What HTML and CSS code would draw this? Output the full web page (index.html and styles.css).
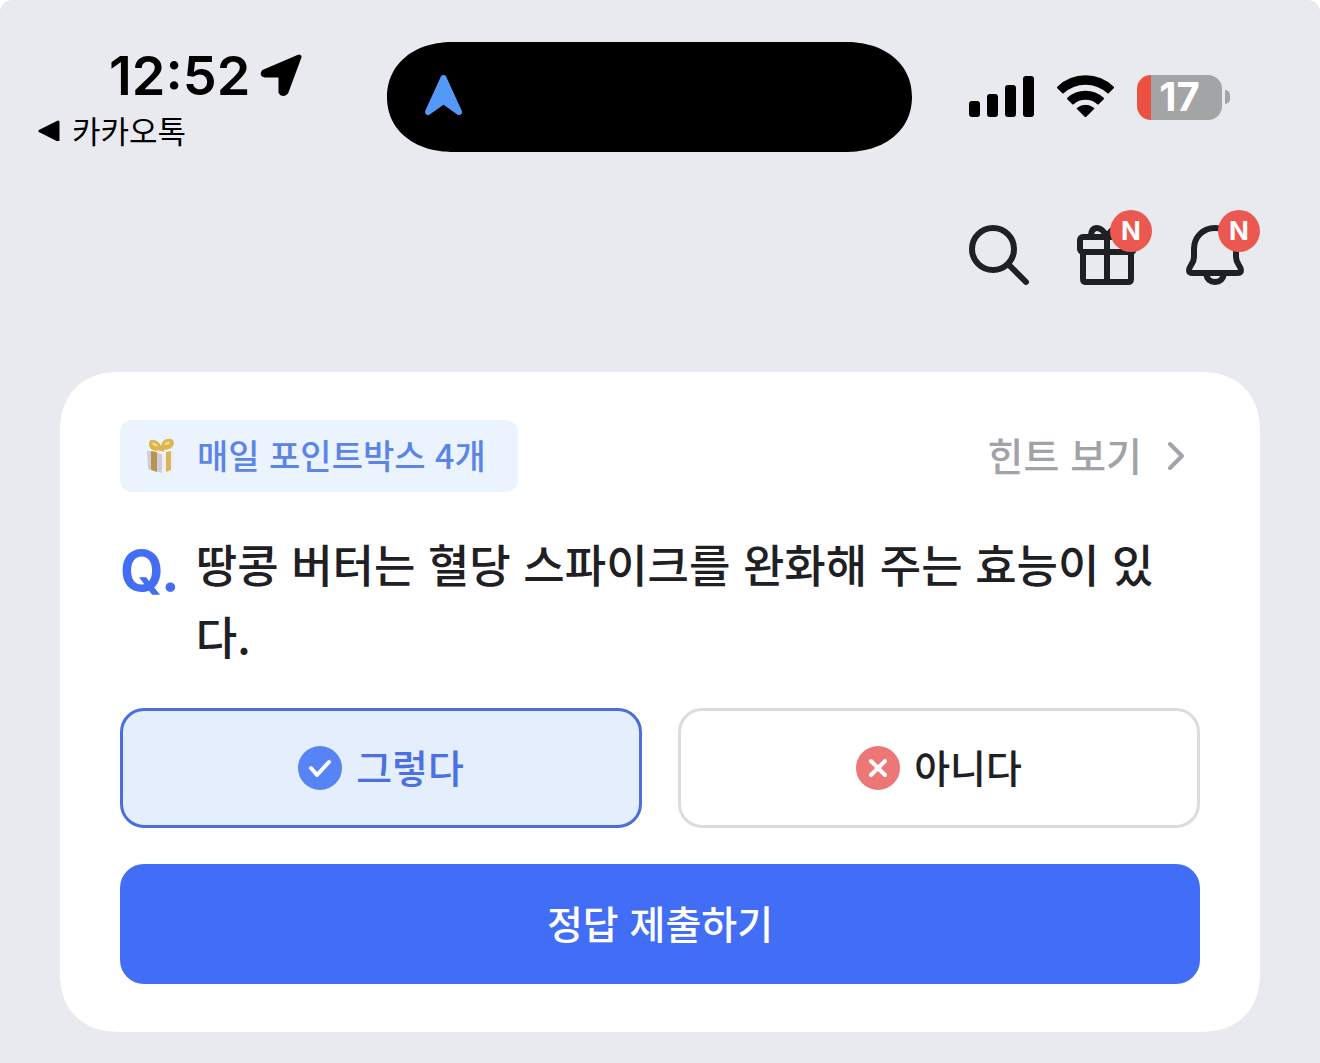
FILE: index.html
```html
<!DOCTYPE html>
<html lang="ko">
<head>
  <meta charset="UTF-8">
  <meta name="viewport" content="width=device-width, initial-scale=1">
  <title>오늘의 퀴즈</title>
  <link rel="stylesheet" href="styles.css">
</head>
<body>
  <div class="screen">
    <div class="status-bar">
      <div class="status-left">
        <div class="clock">
          <span>12:52</span>
          <svg width="44" height="44" viewBox="0 0 44 44" aria-hidden="true">
            <path d="M39 4L4 19Q2 22 5 22H21V39Q23 42 26 39Z" stroke="#000" stroke-width="5" stroke-linejoin="round"/>
          </svg>
        </div>
        <a class="back-app" href="#">
          <svg width="22" height="22" viewBox="0 0 22 22" aria-hidden="true">
            <path d="M2 12L20 3V21Z" stroke="#000" stroke-width="3" stroke-linejoin="round"/>
          </svg>
          카카오톡
        </a>
      </div>

      <div class="island">
        <svg width="40" height="46" viewBox="0 0 40 46" aria-hidden="true">
          <path d="M19.500 4L35 38L19.500 27L4 38Z" fill="#5599f8" stroke="#5599f8" stroke-width="6" stroke-linejoin="round"/>
        </svg>
      </div>

      <div class="status-right">
        <svg width="66" height="42" viewBox="0 0 66 42" aria-hidden="true">
          <rect x="0" y="25" width="11" height="16" rx="3"/>
          <rect x="18" y="18" width="11" height="23" rx="3"/>
          <rect x="36" y="9" width="11" height="32" rx="3"/>
          <rect x="54" y="0" width="11" height="41" rx="3"/>
        </svg>
        <svg width="60" height="44" viewBox="0 0 60 44" aria-hidden="true">
          <g stroke="#000" stroke-linejoin="round">
            <path d="M2 12.500A39.500 39.500 0 0 1 57 12.500L52 17.500A33 33 0 0 0 7 17.500Z" stroke-width="2"/>
            <path d="M12 23.500A26 26 0 0 1 47 23.500L42 28.500A19 19 0 0 0 17 28.500Z" stroke-width="2"/>
            <path d="M29.500 42L21 33.500A13 13 0 0 1 38 33.500Z" stroke-width="1"/>
          </g>
        </svg>
        <div class="battery">
          <span class="battery-level">17</span>
          <span class="battery-cap"></span>
        </div>
      </div>
    </div>

    <header class="toolbar">
      <button class="icon-btn" aria-label="검색">
        <svg width="72" height="72" viewBox="0 0 72 72">
          <circle cx="30" cy="30" r="21"/>
          <path d="M45 45L63 63"/>
        </svg>
      </button>
      <button class="icon-btn" aria-label="선물">
        <svg width="72" height="72" viewBox="0 0 72 72">
          <path d="M12 33V60Q12 63 15 63H57Q60 63 60 60V33M36 18V63"/>
          <rect x="9" y="18" width="54" height="15" rx="3"/>
          <path d="M36 18C33 12 30 9 26 9Q20 9 20 18M36 18C39 12 42 9 46 9Q52 9 52 18"/>
        </svg>
        <span class="badge">N</span>
      </button>
      <button class="icon-btn" aria-label="알림">
        <svg width="72" height="72" viewBox="0 0 72 72">
          <path d="M36 9C24 9 15 18 15 30V38C15 45 10 47 10 51Q10 54 14 54H58Q62 54 62 51C62 47 57 45 57 38V30C57 18 48 9 36 9Z"/>
          <path d="M27 55C28 60 31 63 36 63S44 60 45 55"/>
        </svg>
        <span class="badge">N</span>
      </button>
    </header>

    <main class="quiz-card">
      <div class="card-top">
        <div class="point-chip">
          <svg width="30" height="36" viewBox="0 0 30 36" aria-hidden="true">
            <path d="M1 12L16 15V35L2 31Z" fill="#cfcddc"/>
            <path d="M16 15L28 12V31L16 35Z" fill="#f0edf3"/>
            <path d="M1 12L14 9L28 12L16 16Z" fill="#fff"/>
            <path d="M5 13L11 14V34L5 32Z" fill="#b8954a"/>
            <path d="M20 14L25 13V32L20 34Z" fill="#d9b65c"/>
            <path d="M14 12C8 14 3 12 3 6Q3 1 8 2Q13 3 15 8Q16 2 21 1Q28 0 28 6Q26 12 17 12L20 14L14 13L9 15Z" fill="#dfb550"/>
            <path d="M6 5Q9 4 12 8Q8 9 6 5M18 7Q20 3 24 4Q24 7 18 7" fill="#f7df98"/>
          </svg>
          <span class="label">매일 포인트박스 4개</span>
        </div>
        <a class="hint-link" href="#">
          <span class="label">힌트 보기</span>
          <svg width="20" height="32" viewBox="0 0 20 32" aria-hidden="true">
            <path d="M4 4L16 16L4 28" fill="none" stroke="#a2a2a9" stroke-width="4" stroke-linecap="round" stroke-linejoin="round"/>
          </svg>
        </a>
      </div>

      <div class="question">
        <span class="question-mark">Q.</span>
        <p class="question-text">땅콩 버터는 혈당 스파이크를 완화해 주는 효능이 있다.</p>
      </div>

      <div class="answers">
        <button class="answer selected" aria-pressed="true">
          <svg width="44" height="44" viewBox="0 0 44 44" aria-hidden="true">
            <circle cx="22" cy="22" r="22" fill="#5784f5"/>
            <path d="M13 22L19 29L31 16" fill="none" stroke="#fff" stroke-width="4" stroke-linecap="round" stroke-linejoin="round"/>
          </svg>
          <span class="label">그렇다</span>
        </button>
        <button class="answer" aria-pressed="false">
          <svg width="44" height="44" viewBox="0 0 44 44" aria-hidden="true">
            <circle cx="22" cy="22" r="22" fill="#ed7777"/>
            <path d="M15 15L29 29M29 15L15 29" stroke="#fff" stroke-width="4" stroke-linecap="round"/>
          </svg>
          <span class="label">아니다</span>
        </button>
      </div>

      <button class="submit"><span class="label">정답 제출하기</span></button>
    </main>
  </div>
</body>
</html>
```

FILE: styles.css
```css
* {
  box-sizing: border-box;
}

body {
  margin: 0;
  background: #fff;
  color: #1f2024;
  font-family: "Noto Sans CJK KR", sans-serif;
  font-weight: 500;
}

button {
  padding: 0;
  border: none;
  background: none;
  color: inherit;
  font: inherit;
  cursor: pointer;
}

a {
  color: inherit;
  text-decoration: none;
}

svg {
  display: block;
  flex: none;
}

.label {
  display: block;
  padding-bottom: 4px;
}

.screen {
  min-height: 100vh;
  padding-bottom: 30px;
  background: #e9eaef;
  border-radius: 12px 12px 0 0;
}

/* status bar */
.status-bar {
  display: grid;
  grid-template-columns: 387fr 525fr 408fr;
  padding-top: 42px;
  color: #000;
}

.clock {
  display: flex;
  align-items: center;
  gap: 10px;
  height: 66px;
  padding-left: 109px;
  font-family: Inter, sans-serif;
  font-size: 54px;
  font-weight: 600;
}

.back-app {
  display: flex;
  align-items: center;
  gap: 12px;
  height: 44px;
  padding-left: 38px;
  font-size: 31px;
  font-weight: 400;
  line-height: 44px;
}

.island {
  display: flex;
  align-items: center;
  height: 110px;
  padding-left: 37px;
  background: #000;
  border-radius: 66px / 55px;
  corner-shape: superellipse(1.1);
}

.status-right {
  display: flex;
  align-items: center;
  gap: 21px;
  padding-left: 57px;
}

.battery {
  display: flex;
  align-items: center;
  gap: 3px;
}

.battery-level {
  width: 85px;
  height: 45px;
  border-radius: 14px;
  background: linear-gradient(to right, #eb5140 14px, #a3a4a6 14px);
  color: #fff;
  font-family: Inter, sans-serif;
  font-size: 40px;
  font-weight: 700;
  line-height: 44px;
  text-align: center;
}

.battery-cap {
  width: 5px;
  height: 14px;
  border-radius: 0 5px 5px 0;
  background: #a3a4a6;
}

/* toolbar */
.toolbar {
  display: flex;
  justify-content: flex-end;
  gap: 36px;
  padding: 67px 69px 81px;
}

.icon-btn {
  position: relative;
}

.icon-btn svg {
  fill: none;
  stroke: #1f2024;
  stroke-width: 6;
  stroke-linecap: round;
  stroke-linejoin: round;
}

.badge {
  position: absolute;
  top: -9px;
  right: -9px;
  width: 42px;
  height: 42px;
  border-radius: 50%;
  background: #eb5850;
  color: #fff;
  font-family: Inter, sans-serif;
  font-size: 26px;
  font-weight: 700;
  line-height: 42px;
  text-align: center;
}

/* quiz card */
.quiz-card {
  display: flex;
  flex-direction: column;
  gap: 36px;
  margin: 0 60px;
  padding: 48px 60px;
  background: #fff;
  border-radius: 60px;
  corner-shape: superellipse(1.2);
}

.card-top {
  display: flex;
  justify-content: space-between;
  align-items: center;
}

.point-chip {
  display: flex;
  align-items: center;
  gap: 21px;
  height: 72px;
  padding: 0 32px 0 26px;
  border-radius: 12px;
  background: #ebf4fe;
  color: #5b84e8;
  font-size: 34px;
}

.hint-link {
  display: flex;
  align-items: center;
  gap: 24px;
  padding-right: 14px;
  color: #a2a2a9;
  font-size: 39px;
  line-height: 68px;
}

.question {
  display: flex;
  gap: 16px;
}

.question-mark {
  color: #436df5;
  font-family: Inter, sans-serif;
  font-size: 56px;
  font-weight: 700;
  line-height: 86px;
}

.question-text {
  flex: 1;
  margin: 0;
  font-size: 45px;
  line-height: 72px;
}

.answers {
  display: grid;
  grid-template-columns: 1fr 1fr;
  gap: 36px;
}

.answer {
  display: flex;
  justify-content: center;
  align-items: center;
  gap: 14px;
  height: 120px;
  border: 3px solid #dcdce0;
  border-radius: 24px;
  font-size: 39px;
}

.answer.selected {
  border-color: #4a6fdc;
  background: #e4eefd;
  color: #4a70e4;
}

.submit {
  height: 120px;
  border-radius: 24px;
  background: #416df7;
  color: #fff;
  font-size: 39px;
}
```
